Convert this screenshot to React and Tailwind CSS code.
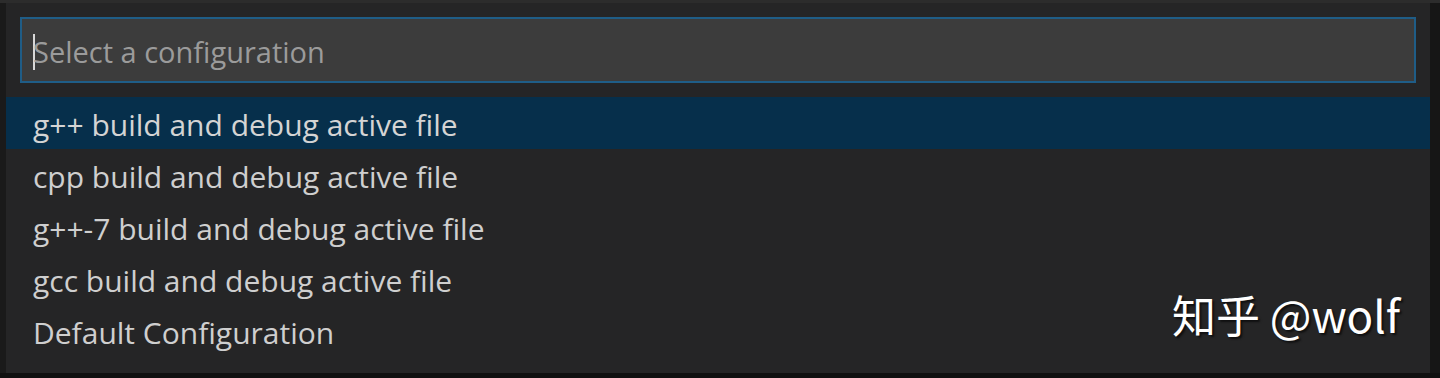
import React from "react";

const items = [
  "g++ build and debug active file",
  "cpp build and debug active file",
  "g++-7 build and debug active file",
  "gcc build and debug active file",
  "Default Configuration",
];

const App = () => {
  return (
    <div className="w-full h-[378px] bg-[#1b1b1b] flex flex-col overflow-hidden font-['Open_Sans','Noto_Sans','Noto_Sans_CJK_SC',sans-serif]">
      <div className="h-[3px] bg-[#2c2c2c]" />
      <div className="flex-1 flex">
        <div className="w-[6px] bg-[#1a1a1a]" />
        <div className="relative flex-1 bg-[#252526] pt-[14px] pb-[16px] flex flex-col">
          <div className="mx-[14px] h-[66px] border-2 border-[#1f5d87] bg-[#3c3c3c] flex items-center pl-[11px] pt-[3px]">
            <div className="w-[2px] h-[36px] bg-[#d8d8d8] -mr-[2px]" />
            <span className="text-[29px] text-[#9b9b9b]">Select a configuration</span>
          </div>
          <div className="mt-[14px] flex flex-col">
            {items.map((item, i) => (
              <div
                key={item}
                className={
                  i === 0
                    ? "h-[52px] flex items-center pl-[27px] pt-[2px] bg-[#062f4b] text-[30px] text-[#d4d4d4]"
                    : "h-[52px] flex items-center pl-[27px] pt-[2px] text-[30px] text-[#cfcfcf]"
                }
              >
                {item}
              </div>
            ))}
          </div>
          <div className="absolute right-[30px] bottom-[26px] text-[44px] text-white [text-shadow:2px_2px_2px_rgba(0,0,0,0.6)] font-['Noto_Sans_CJK_SC','Noto_Sans',sans-serif]">
            知乎 @wolf
          </div>
        </div>
        <div className="w-[10px] bg-[#161616]" />
      </div>
      <div className="h-[5px] bg-[#101010]" />
    </div>
  );
};

export default App;
